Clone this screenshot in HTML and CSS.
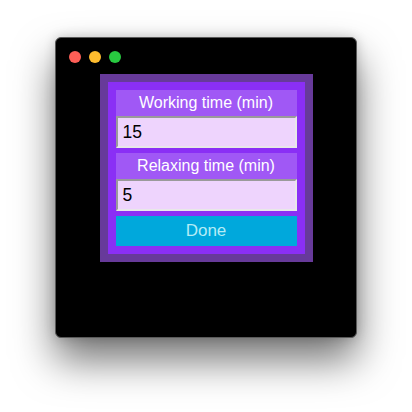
FILE: index.html
```html
<!DOCTYPE html>
<html>
<head>
<meta charset="utf-8">
<link rel="stylesheet" href="styles.css">
</head>
<body>
<div class="window">
  <div class="titlebar">
    <span class="light red"></span>
    <span class="light yellow"></span>
    <span class="light green"></span>
  </div>
  <div class="panel">
    <div class="field">
      <div class="label">Working time (min)</div>
      <input class="input" type="text" value="15">
    </div>
    <div class="field">
      <div class="label">Relaxing time (min)</div>
      <input class="input" type="text" value="5">
    </div>
    <button class="done">Done</button>
  </div>
</div>
</body>
</html>
```

FILE: styles.css
```css
html, body {
  margin: 0;
  padding: 0;
  background: #ffffff;
}
body {
  box-sizing: border-box;
  min-height: 412px;
  padding: 37px 0 0 55px;
  font-family: "Liberation Sans", Arial, sans-serif;
}
.window {
  width: 300px;
  height: 299px;
  background: #000;
  border: 1px solid #5a5a5a;
  border-radius: 6px;
  box-shadow: 0 22px 40px rgba(0,0,0,0.55), 0 0 12px rgba(0,0,0,0.18);
  display: flex;
  flex-direction: column;
  align-items: center;
}
.titlebar {
  align-self: stretch;
  height: 36px;
  box-sizing: border-box;
  padding: 13px 0 0 13px;
  display: flex;
  gap: 8px;
}
.light {
  width: 12px;
  height: 12px;
  border-radius: 50%;
}
.red { background: #fe5f57; }
.yellow { background: #febc2e; }
.green { background: #28c840; }
.panel {
  width: 181px;
  border: 8px solid #673a9a;
  background: #8a2ff5;
  padding: 8px;
  display: flex;
  flex-direction: column;
  gap: 5px;
}
.field {
  display: flex;
  flex-direction: column;
}
.label {
  height: 26px;
  line-height: 26px;
  background: #a058f5;
  color: #fff;
  text-align: center;
  font-size: 16px;
}
.input {
  height: 32px;
  box-sizing: border-box;
  margin: 0;
  width: 100%;
  border: 2px solid;
  border-color: #9a9a9a #e8e8e8 #e8e8e8 #9a9a9a;
  background: #eed4fd;
  padding: 0 5px;
  font-family: "Liberation Sans", Arial, sans-serif;
  font-size: 17.5px;
  color: #000;
  outline: none;
}
.done {
  height: 30px;
  margin: 0;
  border: none;
  background: #00a8dc;
  color: #b4ecf6;
  font-family: "Liberation Sans", Arial, sans-serif;
  font-size: 17px;
  padding: 0;
}
```
